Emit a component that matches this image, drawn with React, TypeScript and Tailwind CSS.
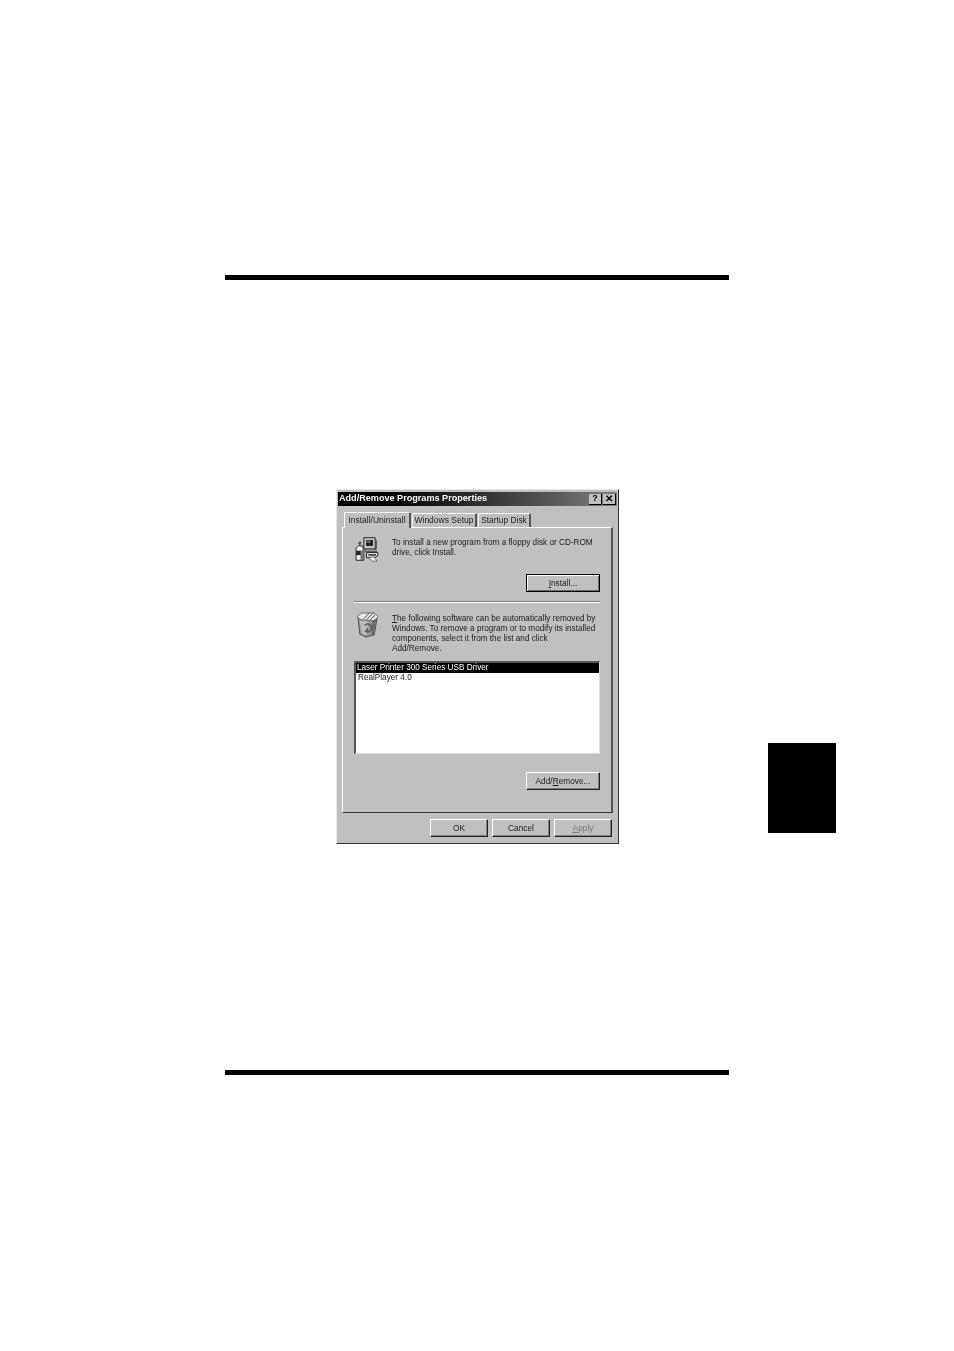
import React from "react";

const font = { fontFamily: '"Liberation Sans", Arial, sans-serif' };

function Btn({ children, w, strong, dim }: { children: React.ReactNode; w: string; strong?: boolean; dim?: boolean }) {
  const size = w + " h-[18px] flex items-center justify-center text-[8.3px] leading-none border ";
  const edge = strong
    ? "border-black shadow-[inset_1px_1px_0_#fff,inset_-1px_-1px_0_#6a6a6a] "
    : "border-t-white border-l-white border-r-[#222] border-b-[#222] shadow-[inset_-1px_-1px_0_#808080] ";
  return <div className={size + edge + (dim ? "text-[#777]" : "text-[#1c1c1c]")}>{children}</div>;
}

function Tab({ label, active, w, size }: { label: string; active?: boolean; w: string; size: string }) {
  return (
    <div
      className={
        w + " " + size +
        " flex items-center justify-center whitespace-nowrap leading-none text-[#222] border-t border-l border-r-2 border-t-white border-l-white border-r-[#555] rounded-t-[2px] " +
        (active ? "h-[16px] -mb-px relative z-10 bg-[#c0c0c0]" : "h-[14px]")
      }
    >
      {label}
    </div>
  );
}

function SetupIcon() {
  return (
    <svg width="27" height="26" viewBox="0 0 30 30" className="shrink-0 -ml-[1px] mt-[1px]">
      <path d="M12 2h13v13H12z" fill="#c8c8c8" stroke="#111" />
      <path d="M14.5 4.5h8v7h-8z" fill="#222" />
      <path d="M15 5h5v3h-5z" fill="#666" />
      <path d="M25 3l2 2v10h-2z" fill="#555" />
      <path d="M13 15h12l2 3H14z" fill="#999" stroke="#222" strokeWidth=".7" />
      <path d="M15 19h13v4l-4 2H15z" fill="#ddd" stroke="#111" />
      <path d="M17 21h9v1.6h-9z" fill="#222" />
      <path d="M17 25l5 4h5l-3-5z" fill="#eee" stroke="#333" strokeWidth=".7" />
      <path d="M3 14l3-3 5 1v4l1 1v11H3z" fill="#f2f2f2" stroke="#111" />
      <path d="M3 17h9v5H3z" fill="#222" />
      <path d="M8 17h4v11H8z" fill="#777" />
      <path d="M5 9l2-3 2 1-1 4z" fill="#555" />
    </svg>
  );
}

function BinIcon() {
  return (
    <svg width="23" height="27" viewBox="0 0 24 28" className="shrink-0">
      <path d="M2 6l2 18 6 3 9-2 3-18z" fill="#9a9a9a" stroke="#333" strokeWidth=".8" />
      <path d="M1 6l5-4h13l4 4-4 4-14-1z" fill="#e8e8e8" stroke="#555" strokeWidth=".8" />
      <path d="M8 8l6-6M11 9l7-7M15 9l5-5" stroke="#444" strokeWidth="1" />
      <path d="M4 10l2 13 5 2 1-14z" fill="#bdbdbd" />
      <path d="M9 15a4 4 0 1 1 1 6l2-1-1-2" fill="none" stroke="#555" strokeWidth="1.4" />
      <path d="M17 10l4-2-2 16-3 1z" fill="#6a6a6a" />
    </svg>
  );
}

function Dialog() {
  return (
    <div className="w-[283px] h-[355px] mt-[209px] ml-[111px] bg-[#c0c0c0] pt-[2px] pl-[1px] pr-[1px] border border-t-[#e8e8e8] border-l-[#e8e8e8] border-r-[#333] border-b-[#333] flex flex-col text-[#1c1c1c] blur-[0.3px]">
      <div className="h-[14px] flex items-center justify-between pl-[1px] pr-[1px] bg-gradient-to-r from-black to-[#808080]">
        <span className="text-[9.1px] font-bold text-white leading-none whitespace-nowrap">Add/Remove Programs Properties</span>
        <div className="flex items-center">
          <div className="w-[13px] h-[11px] bg-[#c0c0c0] border-r border-b border-r-black border-b-black flex items-center justify-center text-[9px] font-bold leading-none text-black">?</div>
          <div className="w-[13px] h-[11px] ml-[1px] bg-[#c0c0c0] border-r border-b border-r-black border-b-black flex items-center justify-center text-[10px] font-bold leading-none text-black">✕</div>
        </div>
      </div>
      <div className="flex items-end h-[21px] pl-[6px] gap-[1px]">
        <Tab label="Install/Uninstall" active w="w-[67px]" size="text-[8.5px]" />
        <Tab label="Windows Setup" w="w-[65px]" size="text-[8.5px]" />
        <Tab label="Startup Disk" w="w-[53px]" size="text-[8.4px]" />
      </div>
      <div className="ml-[4px] mr-[4px] h-[286px] border-t border-l border-t-white border-l-white border-r-2 border-b border-r-[#555] border-b-[#333] pl-[11px] pr-[11px] flex flex-col">
        <div className="flex pt-[7px] h-[46px]">
          <SetupIcon />
          <p className="ml-[12px] text-[8.2px] leading-[10px] pt-[3px] whitespace-nowrap">
            To install a new program from a floppy disk or CD-ROM
            <br />
            drive, click Install.
          </p>
        </div>
        <div className="flex justify-end">
          <Btn w="w-[74px]" strong>
            <span><u>I</u>nstall...</span>
          </Btn>
        </div>
        <div className="mt-[9px] h-[2px] border-t border-t-[#808080] border-b border-b-white" />
        <div className="flex mt-[9px] h-[49px]">
          <div className="pl-[2px] -mt-[1px]"><BinIcon /></div>
          <p className="ml-[13px] text-[8.2px] leading-[10px] pt-[2px] whitespace-nowrap">
            <u>T</u>he following software can be automatically removed by
            <br />
            Windows. To remove a program or to modify its installed
            <br />
            components, select it from the list and click
            <br />
            Add/Remove.
          </p>
        </div>
        <div className="h-[93px] bg-white border-t-2 border-l-2 border-t-[#555] border-l-[#555] border-r border-b border-r-[#ddd] border-b-[#ddd] text-[8.2px] leading-none">
          <div className="h-[10px] bg-black text-white pl-[1px] flex items-center whitespace-nowrap">Laser Printer 300 Series USB Driver</div>
          <div className="h-[11px] pl-[2px] flex items-center text-[#222]">RealPlayer 4.0</div>
        </div>
        <div className="flex justify-end mt-[18px]">
          <Btn w="w-[74px]"><span>Add/<u>R</u>emove...</span></Btn>
        </div>
      </div>
      <div className="flex justify-end gap-[4px] mt-[6px] pr-[5px]">
        <Btn w="w-[58px]">OK</Btn>
        <Btn w="w-[58px]">Cancel</Btn>
        <Btn w="w-[58px]" dim><span><u>A</u>pply</span></Btn>
      </div>
    </div>
  );
}

export default function App() {
  return (
    <div style={font} className="w-[954px] h-[1351px] bg-white flex pl-[225px] pt-[275px]">
      <div className="w-[504px] flex flex-col">
        <div className="h-[5px] bg-black" />
        <Dialog />
        <div className="h-[5px] mt-[226px] bg-black" />
      </div>
      <div className="w-[68px] h-[90px] ml-[39px] mt-[468px] bg-black" />
    </div>
  );
}
